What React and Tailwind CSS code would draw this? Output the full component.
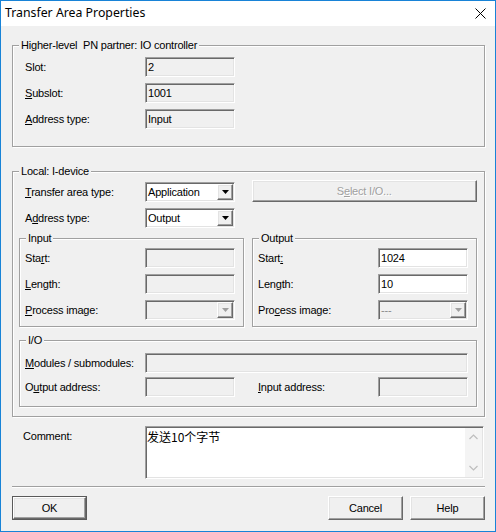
import React from "react";

function Field({ w = "w-[90px]", white = false, children }) {
  return (
    <div
      className={`h-[20px] ${w} shrink-0 border border-t-[#a0a0a0] border-l-[#a0a0a0] border-b-white border-r-white shadow-[inset_1px_1px_0_#696969,inset_-1px_-1px_0_#e3e3e3] ${white ? "bg-white" : "bg-[#f0f0f0]"} flex items-center pl-[2px] leading-none`}
    >
      {children}
    </div>
  );
}

function Arrow({ disabled }) {
  return (
    <div className="w-[16px] h-[16px] mr-[1px] shrink-0 border border-t-white border-l-white border-b-[#696969] border-r-[#696969] shadow-[inset_-1px_-1px_0_#a0a0a0,inset_1px_1px_0_#e3e3e3] bg-[#f0f0f0] flex items-center justify-center">
      <svg width="7" height="4" viewBox="0 0 7 4">
        <path d="M0 0H7L3.5 4Z" fill={disabled ? "#a0a0a0" : "#000"} />
      </svg>
    </div>
  );
}

function Combo({ value, disabled = false, gray = false }) {
  return (
    <div
      className={`h-[20px] w-[90px] shrink-0 border border-t-[#a0a0a0] border-l-[#a0a0a0] border-b-white border-r-white shadow-[inset_1px_1px_0_#696969,inset_-1px_-1px_0_#e3e3e3] ${disabled ? "bg-[#f0f0f0]" : "bg-white"} flex items-center`}
    >
      <span className={`flex-1 pl-[2px] leading-none ${gray ? "text-[#8a8a8a]" : "text-black"}`}>{value}</span>
      <Arrow disabled={disabled} />
    </div>
  );
}

function Group({ label, className = "", children }) {
  return (
    <div className={`relative border border-[#a0a0a0] shadow-[inset_1px_1px_0_#fff,1px_1px_0_#fff] ${className}`}>
      <span className="absolute top-[-7px] left-[6px] bg-[#f0f0f0] px-[2px] leading-[13px] whitespace-pre">
        {label}
      </span>
      {children}
    </div>
  );
}

function Label({ w = "w-[120px]", children }) {
  return <div className={`${w} shrink-0 leading-none whitespace-pre`}>{children}</div>;
}

function U({ children }) {
  return <span className="underline underline-offset-[1px]">{children}</span>;
}

function Btn({ children, def = false }) {
  return (
    <div className={`w-[75px] h-[24px] ${def ? "border border-[#5a5a5a]" : ""} flex`}>
      <div className="flex-1 border border-t-white border-l-white border-b-[#696969] border-r-[#696969] shadow-[inset_-1px_-1px_0_#a0a0a0,inset_1px_1px_0_#e3e3e3] bg-[#f0f0f0] flex items-center justify-center leading-none">
        {children}
      </div>
    </div>
  );
}

export default function App() {
  return (
    <div className="w-[496px] h-[532px] border border-[#1883d7] bg-[#f0f0f0] flex flex-col font-['Liberation_Sans',Arial,sans-serif] text-[11px] tracking-[-0.2px] text-black overflow-hidden">
      {/* Title bar */}
      <div className="h-[25px] bg-white flex items-center justify-between pl-[4px] pr-[9px] shrink-0">
        <span className="font-['Noto_Sans',sans-serif] text-[12.3px] tracking-normal leading-none text-black mt-[-1px]">Transfer Area Properties</span>
        <svg width="11" height="11" viewBox="0 0 11 11">
          <path d="M0.5 0.5L10.5 10.5M10.5 0.5L0.5 10.5" stroke="#000" strokeWidth="1" />
        </svg>
      </div>

      <div className="pl-[11px] flex flex-col">
        {/* Group 1 */}
        <Group label={"Higher-level  PN partner: IO controller"} className="w-[473px] mt-[19px] pt-[11px] pb-[17px] pl-[12px]">
          <div className="flex flex-col gap-[6px]">
            <div className="flex items-center">
              <Label>Slot:</Label>
              <Field>2</Field>
            </div>
            <div className="flex items-center">
              <Label><U>S</U>ubslot:</Label>
              <Field>1001</Field>
            </div>
            <div className="flex items-center">
              <Label><U>A</U>ddress type:</Label>
              <Field>Input</Field>
            </div>
          </div>
        </Group>

        {/* Group 2 */}
        <Group label="Local: I-device" className="w-[473px] mt-[24px] pt-[8px] pb-[9px] pl-[6px] pr-[7px]">
          <div className="flex gap-[8px]">
            <div className="w-[225px] flex flex-col">
              <div className="flex items-center mt-[2px] pl-[6px]">
                <Label><U>T</U>ransfer area type:</Label>
                <Combo value="Application" />
              </div>
              <div className="flex items-center mt-[6px] pl-[6px]">
                <Label>A<U>d</U>dress type:</Label>
                <Combo value="Output" />
              </div>
            </div>
            <div className="w-[226px] h-[22px] border border-t-white border-l-white border-b-[#696969] border-r-[#696969] shadow-[inset_-1px_-1px_0_#a0a0a0,inset_1px_1px_0_#e3e3e3] bg-[#f0f0f0] flex items-center justify-center leading-none text-[#a0a0a0] [text-shadow:1px_1px_0_#fff]">
              <span>S<U>e</U>lect I/O...</span>
            </div>
          </div>

          <div className="flex gap-[8px] mt-[10px]">
            <Group label="Input" className="w-[225px] pt-[9px] pb-[6px] pl-[5px]">
              <div className="flex flex-col gap-[6px]">
                <div className="flex items-center">
                  <Label>Sta<U>r</U>t:</Label>
                  <Field />
                </div>
                <div className="flex items-center">
                  <Label><U>L</U>ength:</Label>
                  <Field />
                </div>
                <div className="flex items-center">
                  <Label><U>P</U>rocess image:</Label>
                  <Combo value="" disabled />
                </div>
              </div>
            </Group>
            <Group label="Output" className="w-[225px] pt-[9px] pb-[6px] pl-[5px]">
              <div className="flex flex-col gap-[6px]">
                <div className="flex items-center">
                  <Label>Start<U>:</U></Label>
                  <Field white>1024</Field>
                </div>
                <div className="flex items-center">
                  <Label>Len<U>g</U>th:</Label>
                  <Field white>10</Field>
                </div>
                <div className="flex items-center">
                  <Label>Pro<U>c</U>ess image:</Label>
                  <Combo value="---" disabled gray />
                </div>
              </div>
            </Group>
          </div>

          <Group label="I/O" className="w-[458px] mt-[13px] pt-[12px] pb-[9px] pl-[5px]">
            <div className="flex flex-col gap-[4px]">
              <div className="flex items-center">
                <Label><U>M</U>odules / submodules:</Label>
                <Field w="w-[323px]" />
              </div>
              <div className="flex items-center">
                <Label>O<U>u</U>tput address:</Label>
                <Field />
                <div className="w-[23px] shrink-0" />
                <Label><U>I</U>nput address:</Label>
                <Field />
              </div>
            </div>
          </Group>
        </Group>

        {/* Comment */}
        <div className="flex mt-[9px]">
          <div className="w-[133px] shrink-0 pl-[11px] pt-[5px] leading-none">Comment:</div>
          <div className="w-[339px] h-[53px] border border-t-[#a0a0a0] border-l-[#a0a0a0] border-b-white border-r-white shadow-[inset_1px_1px_0_#696969,inset_-1px_-1px_0_#e3e3e3] bg-white flex p-[1px]">
            <div className="flex-1 pt-[2px] font-['Noto_Sans_CJK_SC',sans-serif] text-[12px] tracking-normal leading-[14px]">
              发送10个字节
            </div>
            <div className="w-[17px] bg-[#f4f4f4] flex flex-col items-center justify-between py-[6px]">
              <svg width="9" height="6" viewBox="0 0 9 6">
                <path d="M0.5 5L4.5 1L8.5 5" stroke="#bdbdbd" strokeWidth="1.2" fill="none" />
              </svg>
              <svg width="9" height="6" viewBox="0 0 9 6">
                <path d="M0.5 1L4.5 5L8.5 1" stroke="#bdbdbd" strokeWidth="1.2" fill="none" />
              </svg>
            </div>
          </div>
        </div>

        {/* Separator */}
        <div className="w-[473px] mt-[7px] border-t border-t-[#a0a0a0] border-b border-b-white" />

        {/* Buttons */}
        <div className="w-[473px] mt-[8px] flex items-center">
          <Btn def>OK</Btn>
          <div className="flex-1" />
          <div className="flex gap-[7px]">
            <Btn>Cancel</Btn>
            <Btn>Help</Btn>
          </div>
        </div>
      </div>
    </div>
  );
}
